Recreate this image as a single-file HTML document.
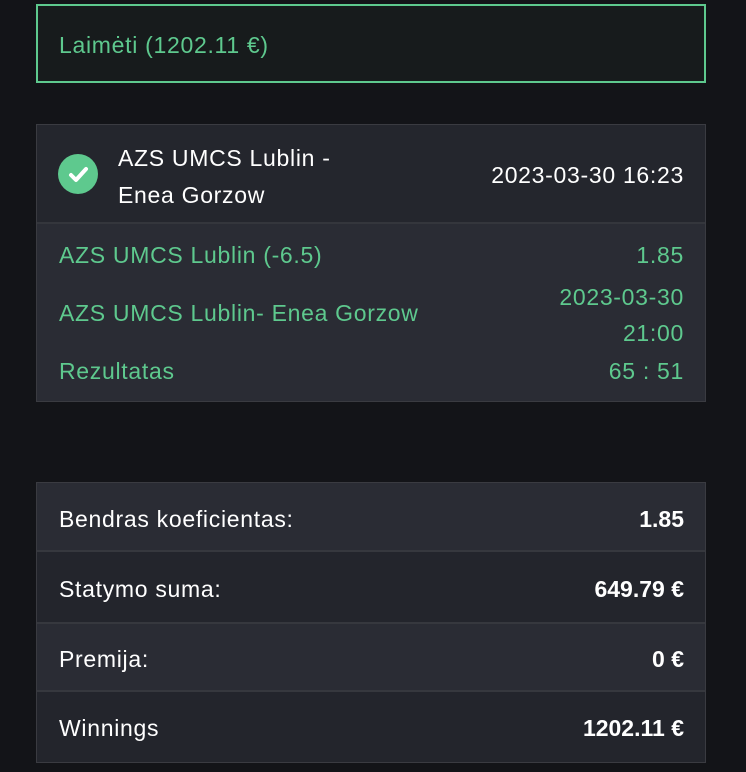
<!DOCTYPE html>
<html><head><meta charset="utf-8"><style>
body{margin:0;background:#131418;font-family:"Liberation Sans",sans-serif;width:746px;height:772px;overflow:hidden;position:relative}
.a{position:absolute;box-sizing:border-box}
.t{font-size:23px;letter-spacing:0.7px;white-space:nowrap}
.g{color:#5ec98e}
.w{color:#fff}
</style></head><body>
<div class="a" style="left:36px;top:4px;width:670px;height:79px;background:#171b1c;border:2px solid #5ec98e"></div>
<div class="a g t" style="left:59px;top:32px">Laimėti (1202.11 €)</div>

<div class="a" style="left:36px;top:124px;width:670px;height:278px;background:#24262d;border:1px solid #3a3b41"></div>
<div class="a" style="left:37px;top:222px;width:668px;height:179px;background:#2a2c34;border-top:2px solid #34363c"></div>
<div class="a" style="left:58px;top:154px;width:40px;height:40px;border-radius:50%;background:#5ec98e"></div>
<svg class="a" style="left:58px;top:154px" width="40" height="40"><path d="M13 21l5 5 10-11" stroke="#fff" stroke-width="4" fill="none" stroke-linecap="round" stroke-linejoin="round"/></svg>
<div class="a w t" style="left:118px;top:140px;line-height:37px">AZS UMCS Lublin -<br>Enea Gorzow</div>
<div class="a w t" style="right:62px;top:162px">2023-03-30 16:23</div>
<div class="a g t" style="left:59px;top:242px">AZS UMCS Lublin (-6.5)</div>
<div class="a g t" style="right:62px;top:242px">1.85</div>
<div class="a g t" style="left:59px;top:300px">AZS UMCS Lublin- Enea Gorzow</div>
<div class="a g t" style="right:62px;top:279px;line-height:36px;text-align:right">2023-03-30<br>21:00</div>
<div class="a g t" style="left:59px;top:358px">Rezultatas</div>
<div class="a g t" style="right:62px;top:358px">65 : 51</div>

<div class="a" style="left:36px;top:482px;width:670px;height:281px;background:#23252c;border:1px solid #3a3b41"></div>
<div class="a" style="left:37px;top:483px;width:668px;height:69px;background:#2a2c34;border-bottom:2px solid #36383e"></div>
<div class="a" style="left:37px;top:622px;width:668px;height:70px;background:#2a2c34;border-top:2px solid #36383e;border-bottom:2px solid #36383e"></div>
<div class="a w t" style="left:59px;top:506px">Bendras koeficientas:</div>
<div class="a w t" style="right:62px;top:506px;font-weight:bold;letter-spacing:0">1.85</div>
<div class="a w t" style="left:59px;top:576px">Statymo suma:</div>
<div class="a w t" style="right:62px;top:576px;font-weight:bold;letter-spacing:0">649.79 €</div>
<div class="a w t" style="left:59px;top:646px">Premija:</div>
<div class="a w t" style="right:62px;top:646px;font-weight:bold;letter-spacing:0">0 €</div>
<div class="a w t" style="left:59px;top:715px">Winnings</div>
<div class="a w t" style="right:62px;top:715px;font-weight:bold;letter-spacing:0">1202.11 €</div>
</body></html>
